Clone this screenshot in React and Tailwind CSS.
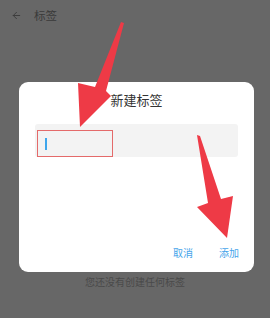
import { ArrowLeft } from 'lucide-react';

const font = { fontFamily: '"Noto Sans CJK SC", "Noto Sans", sans-serif' };

export default function App() {
  return (
    <div className="relative w-[270px] h-[318px] overflow-hidden bg-[#676767]" style={font}>
      {/* page underneath the dialog */}
      <div className="flex items-center h-[31px] pl-[11px] gap-[12px] text-[#3a3a3a]">
        <ArrowLeft size={11} strokeWidth={2} />
        <span className="text-[11.5px] leading-none">标签</span>
      </div>
      <div className="pt-[244px] text-center text-[10px] leading-[14px] text-[#4a4a4a]">
        您还没有创建任何标签
      </div>

      {/* dialog */}
      <div className="absolute left-[19px] top-[82px] w-[235px] h-[190px] rounded-[9px] bg-white flex flex-col">
        <div className="pt-[9px] text-center text-[13px] leading-[18px] text-[#333]">新建标签</div>
        <div className="mt-[15px] mx-[16px] h-[33px] rounded-[3px] bg-[#f3f3f3] flex items-end pl-[2px]">
          <div className="w-[76px] h-[27px] border border-[#e46a6a] flex items-center pl-[7px]">
            <div className="w-[1.5px] h-[12px] bg-[#3ea6ec]" />
          </div>
        </div>
        <div className="mt-auto mb-[12px] flex justify-end gap-[26px] pr-[15px] text-[10px] leading-[14px] text-[#46a4ea]">
          <span>取消</span>
          <span>添加</span>
        </div>
      </div>

      {/* annotation arrows */}
      <svg className="absolute inset-0 pointer-events-none" width="270" height="318" viewBox="0 0 270 318">
        <polygon
          fill="#ee3a46"
          points="121,22 124,23 106,91 111,96 80,127 78,83 95,87"
        />
        <polygon
          fill="#ee3a46"
          points="197,135 200,136 221,199 233,196 227,238 197,207 208,203"
        />
      </svg>
    </div>
  );
}
